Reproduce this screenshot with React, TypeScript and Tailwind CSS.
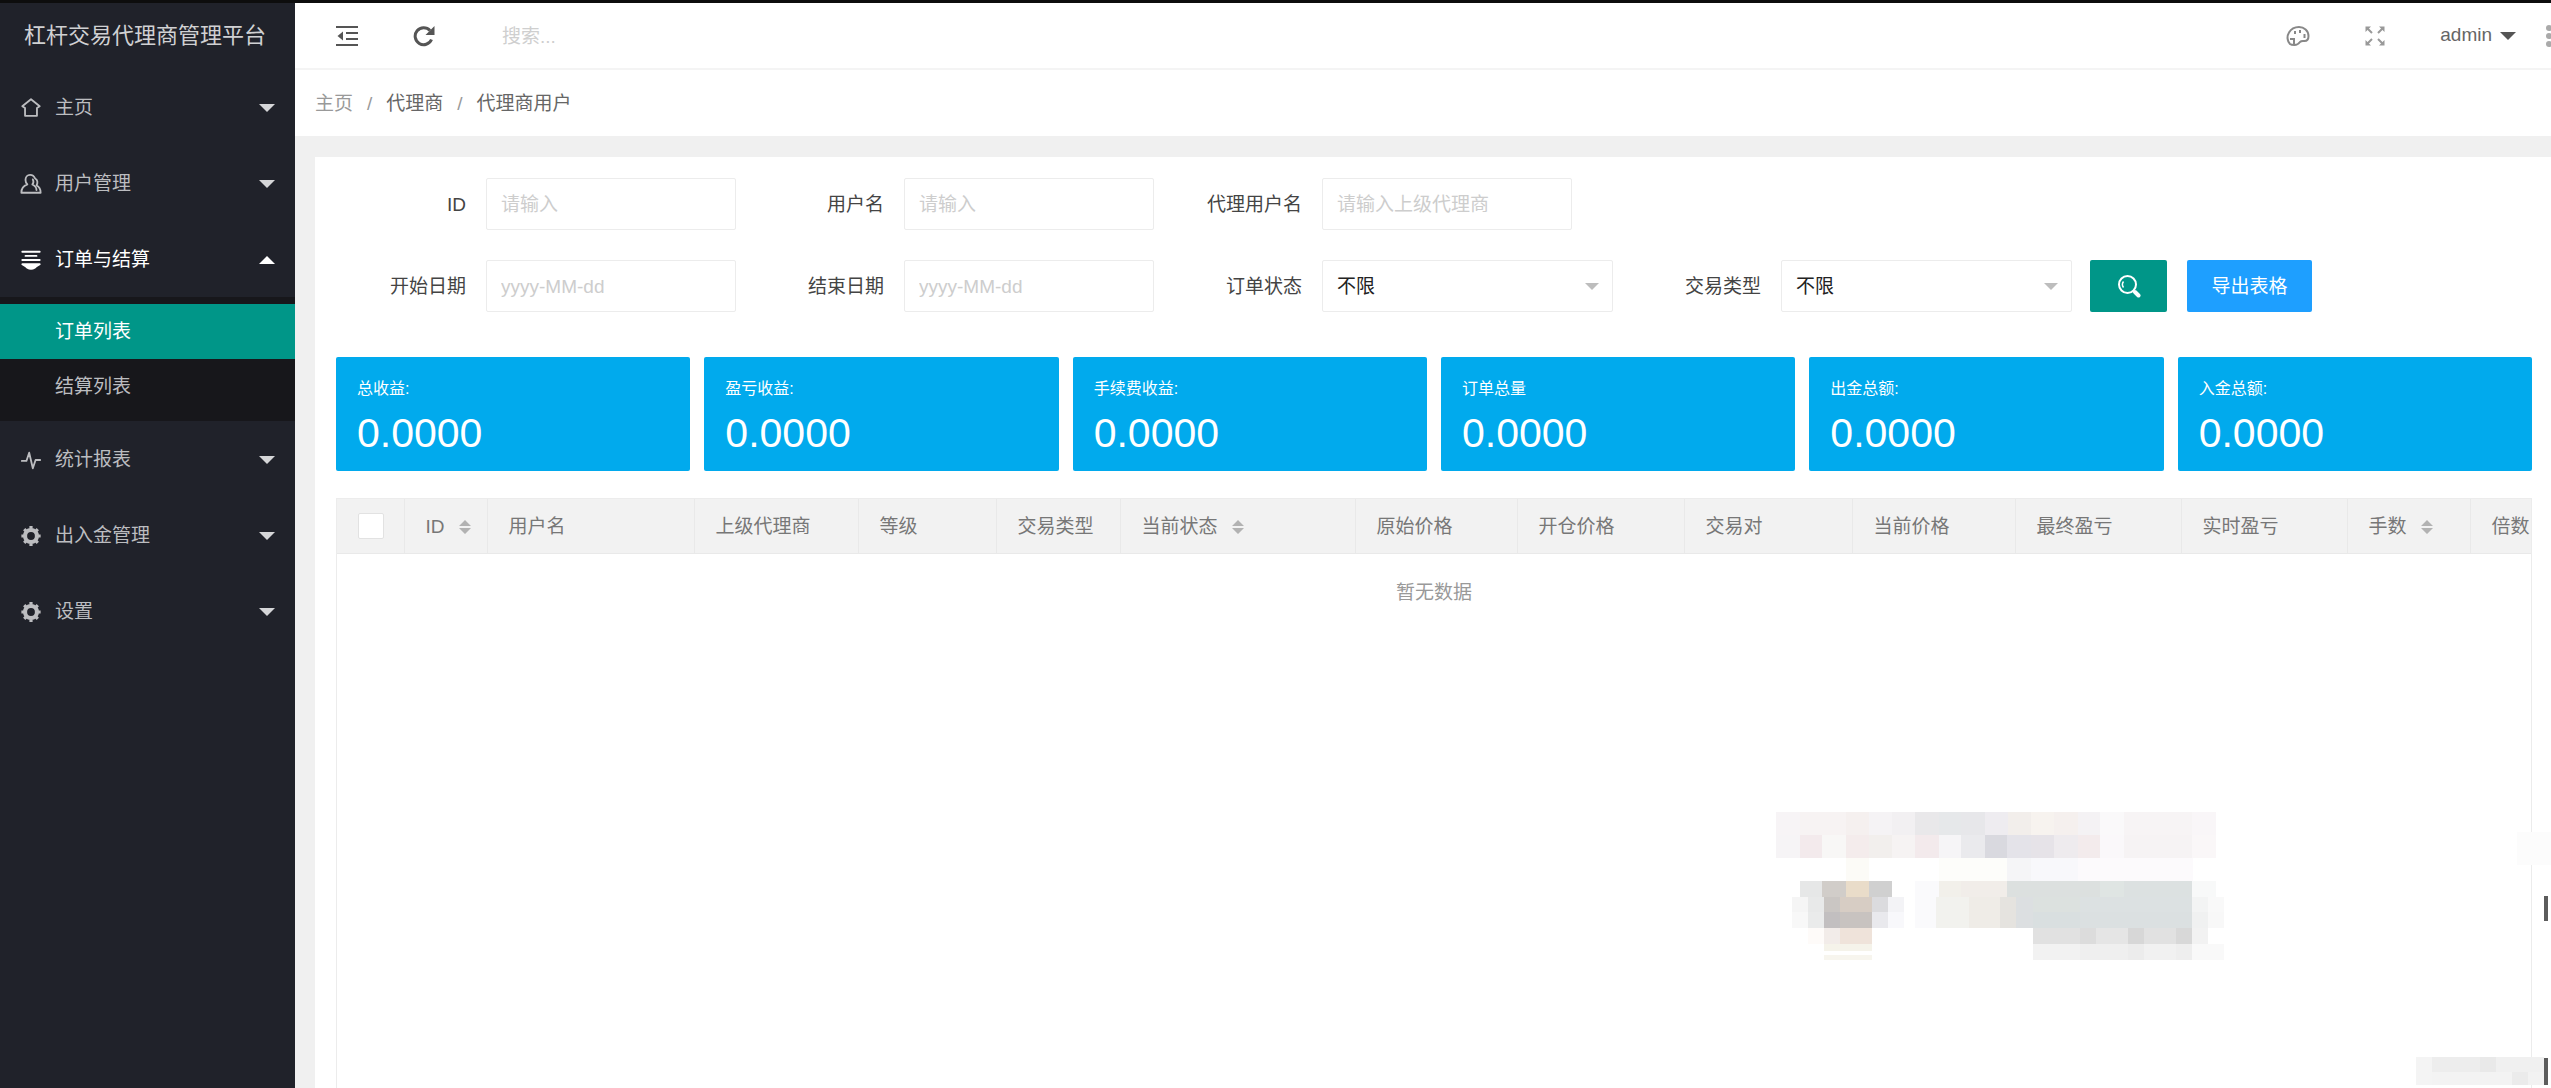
import type { ReactNode } from 'react';

type Block = [x: number, y: number, w: number, h: number, fill: string];

function IconBase({ children }: { children: ReactNode }) {
  return (
    <svg
      viewBox="0 0 24 24"
      fill="none"
      stroke="currentColor"
      strokeWidth="2"
      strokeLinecap="round"
      strokeLinejoin="round"
      className="size-[22px] shrink-0"
      aria-hidden="true"
    >
      {children}
    </svg>
  );
}

const HomeIcon = () => (
  <IconBase>
    <path d="M12 2.500 2.500 10l3 2v8.500h13V12l3-2z" />
  </IconBase>
);

const UserIcon = () => (
  <IconBase>
    <path d="M11 2c-3 0-5 2.500-5 5.500 0 2 .7 3.500 2 5C4 14 1.500 16.500 1.500 21.500h21c0-4-1.500-6.500-4.500-8 1.500-2.500 1.500-6-1.500-7.500C15.500 3.500 13.500 2 11 2z" />
    <path d="M14 7c1 2 .8 4-.5 5.500 3 1.500 4.500 3 4.500 6" />
  </IconBase>
);

const OrdersIcon = () => (
  <IconBase>
    <path d="M2.500 3h19M6 7.500h12M2.500 12h19" />
    <path d="M2.500 16.500h19l-4 2.500c-1 2-3 2.500-5.500 2.500s-4.500-.5-5.500-2.500z" fill="currentColor" />
  </IconBase>
);

const PulseIcon = () => (
  <IconBase>
    <path d="M2 13h5l3-9 4 17 3-9h5" />
  </IconBase>
);

const GearIcon = () => (
  <IconBase>
    <circle cx="12" cy="12" r="6.500" strokeWidth="4.500" />
    <path
      d="M12 1v3M12 20v3M1.500 12h3M19.500 12h3M4.600 4.600l2 2M17.400 17.400l2 2M4.600 19.400l2-2M17.400 6.600l2-2"
      strokeWidth="3.500"
      strokeLinecap="butt"
    />
  </IconBase>
);

function Caret({ up = false, className }: { up?: boolean; className: string }) {
  return (
    <svg viewBox="0 0 16 8" className={className} fill="currentColor" aria-hidden="true">
      <path d={up ? 'M0 8 8 0l8 8z' : 'M0 0h16L8 8z'} />
    </svg>
  );
}

function SortIcon() {
  return (
    <svg viewBox="0 0 12 16" className="ml-[14px] h-4 w-3 shrink-0 text-[#b2b2b2]" fill="currentColor" aria-hidden="true">
      <path d="M0 7 6 1l6 6zM0 9h12l-6 6z" />
    </svg>
  );
}

function NavItem({ icon, label, open = false }: { icon: ReactNode; label: string; open?: boolean }) {
  return (
    <button
      type="button"
      aria-expanded={open}
      className={
        open
          ? 'flex h-[76px] w-full items-center gap-[13px] px-5 pt-[2px] text-left text-white'
          : 'flex h-[76px] w-full items-center gap-[13px] px-5 pt-[2px] text-left text-[#bcbdc0]'
      }
    >
      {icon}
      <span className="flex-1">{label}</span>
      <Caret up={open} className={open ? 'h-2 w-4 text-white' : 'h-2 w-4 text-[#d5d6d8]'} />
    </button>
  );
}

function Sidebar() {
  return (
    <aside className="w-[295px] shrink-0 bg-[#20222a] text-[19px]">
      <div className="flex h-[66px] items-center pb-[2px] pl-6 text-[22px] whitespace-nowrap text-[#d0d1d3]">
        杠杆交易代理商管理平台
      </div>
      <nav>
        <NavItem icon={<HomeIcon />} label="主页" />
        <NavItem icon={<UserIcon />} label="用户管理" />
        <NavItem icon={<OrdersIcon />} label="订单与结算" open />
        <div className="bg-[#17171b] py-[7px]">
          <a href="#orders" className="flex h-[55px] items-center bg-[#009688] pt-[2px] pl-[55px] text-white">
            订单列表
          </a>
          <a href="#settlement" className="flex h-[55px] items-center pt-[2px] pl-[55px] text-[#bcbdc0]">
            结算列表
          </a>
        </div>
        <NavItem icon={<PulseIcon />} label="统计报表" />
        <NavItem icon={<GearIcon />} label="出入金管理" />
        <NavItem icon={<GearIcon />} label="设置" />
      </nav>
    </aside>
  );
}

function Header() {
  return (
    <header className="flex h-[67px] items-center border-b-2 border-[#f4f4f4] bg-white pl-[41px] text-[#555]">
      <button type="button" aria-label="收起菜单">
        <svg viewBox="0 0 22 22" className="size-[22px]" fill="none" stroke="currentColor" strokeWidth="2" aria-hidden="true">
          <path d="M0 2h22M10 8h12M10 14h12M0 20h22" />
          <path d="M7 6.500v9L1.500 11z" fill="currentColor" stroke="none" />
        </svg>
      </button>
      <button type="button" aria-label="刷新" className="ml-[55px]">
        <svg viewBox="0 0 22 22" className="size-[22px]" fill="none" stroke="currentColor" strokeWidth="3" aria-hidden="true">
          <path d="M18.500 14.500A8.500 8.500 0 1 1 17 5.500" />
          <path d="M21.500 1v9h-9z" fill="currentColor" stroke="none" />
        </svg>
      </button>
      <input
        type="text"
        aria-label="搜索"
        placeholder="搜索..."
        className="ml-[67px] h-12 w-[250px] pt-[2px] text-[19px] outline-none placeholder:text-[#cfcfcf]"
      />
      <div className="ml-auto flex items-center">
        <button type="button" aria-label="主题" className="text-[#888]">
          <svg viewBox="0 0 24 22" className="h-[22px] w-6" fill="none" stroke="currentColor" strokeWidth="2" aria-hidden="true">
            <path d="M4 19C1 16 .8 11 3 7.500 5 4 9 2 13 2c5 0 9.500 3.500 9.500 9 0 3.500-1.500 5-4 5-2 0-3-.5-4.500 1-1.500 2-2.500 3-5.500 3-1.800 0-3.300 0-4.500-1z" />
            <path d="M8 20v-6H4M9 6v3M14 5v3M18.500 9v4" />
          </svg>
        </button>
        <button type="button" aria-label="全屏" className="ml-[54px] text-[#999]">
          <svg viewBox="0 0 22 22" className="size-[22px]" fill="none" stroke="currentColor" strokeWidth="2" aria-hidden="true">
            <path d="m3 3 5 5M19 3l-5 5M3 19l5-5M19 19l-5-5" />
            <path d="M1.500 1.500H7L1.500 7zM20.500 1.500V7L15 1.500zM1.500 20.500V15L7 20.500zM20.500 20.500H15l5.500-5.500z" fill="currentColor" stroke="none" />
          </svg>
        </button>
        <button type="button" className="ml-[54px] flex items-center gap-2 text-[19px] text-[#666]">
          admin
          <Caret className="h-2 w-4 text-[#555]" />
        </button>
        <button type="button" aria-label="更多" className="ml-7 w-[7px] overflow-hidden text-[#aaa]">
          <svg viewBox="0 0 7 24" className="h-6 w-[7px]" fill="currentColor" aria-hidden="true">
            <circle cx="5" cy="4" r="3" />
            <circle cx="5" cy="12" r="3" />
            <circle cx="5" cy="20" r="3" />
          </svg>
        </button>
      </div>
    </header>
  );
}

function Breadcrumb() {
  return (
    <nav aria-label="面包屑" className="flex h-[66px] items-center bg-white pt-[2px] pl-5 text-[19px] text-[#666]">
      <a href="#home" className="text-[#999]">主页</a>
      <span className="mx-[14px] text-[#999]">/</span>
      <a href="#agent">代理商</a>
      <span className="mx-[14px] text-[#999]">/</span>
      <span>代理商用户</span>
    </nav>
  );
}

const labelClass = 'w-[150px] shrink-0 px-5 pt-[2px] text-right text-[#444]';
const boxClass = 'h-[52px] rounded-xs border border-[#ececec] bg-white pt-[2px] outline-none';

function TextField({ id, label, placeholder }: { id: string; label: string; placeholder: string }) {
  return (
    <div className="flex items-center">
      <label htmlFor={id} className={labelClass}>{label}</label>
      <input
        id={id}
        type="text"
        placeholder={placeholder}
        className={boxClass + ' w-[250px] px-[14px] placeholder:text-[#cdcdcd]'}
      />
    </div>
  );
}

function SelectField({ id, label }: { id: string; label: string }) {
  return (
    <div className="flex items-center">
      <label htmlFor={id} className={labelClass}>{label}</label>
      <div className="relative">
        <select id={id} className={boxClass + ' w-[291px] appearance-none px-[14px] text-[#222]'}>
          <option>不限</option>
        </select>
        <Caret className="pointer-events-none absolute top-[23px] right-[14px] h-[7px] w-[14px] text-[#bdbdbd]" />
      </div>
    </div>
  );
}

function Filters() {
  return (
    <form className="flex flex-col gap-[30px] text-[19px]">
      <div className="flex flex-wrap gap-[18px]">
        <TextField id="id" label="ID" placeholder="请输入" />
        <TextField id="username" label="用户名" placeholder="请输入" />
        <TextField id="agent" label="代理用户名" placeholder="请输入上级代理商" />
      </div>
      <div className="flex flex-wrap items-center gap-[18px]">
        <TextField id="start" label="开始日期" placeholder="yyyy-MM-dd" />
        <TextField id="end" label="结束日期" placeholder="yyyy-MM-dd" />
        <SelectField id="status" label="订单状态" />
        <SelectField id="type" label="交易类型" />
        <div className="flex items-center gap-5">
          <button
            type="button"
            aria-label="查询"
            className="flex h-[52px] w-[77px] items-center justify-center rounded-xs bg-[#009688] text-white"
          >
            <svg viewBox="0 0 24 24" className="size-6" fill="none" stroke="currentColor" strokeWidth="2" aria-hidden="true">
              <circle cx="10.500" cy="10.500" r="8.500" />
              <path d="M6.500 13.500a5 5 0 0 1 0-6" strokeWidth="1.500" />
              <path d="m18 18 3.500 3.500" strokeWidth="4" strokeLinecap="round" />
            </svg>
          </button>
          <button type="button" className="h-[52px] w-[125px] rounded-xs bg-[#1e9fff] pt-[2px] text-white">
            导出表格
          </button>
        </div>
      </div>
    </form>
  );
}

const stats = ['总收益:', '盈亏收益:', '手续费收益:', '订单总量', '出金总额:', '入金总额:'];

function Stats() {
  return (
    <dl className="mt-[45px] grid grid-cols-6 gap-[14px]">
      {stats.map((label) => (
        <div key={label} className="h-[114px] rounded-xs bg-[#01aaed] px-[21px] pt-5 text-white">
          <dt className="text-[16px] leading-6">{label}</dt>
          <dd className="mt-[6px] text-[41px] leading-[52px]">0.0000</dd>
        </div>
      ))}
    </dl>
  );
}

const columns = [
  { label: 'ID', width: 'w-[83px]', sort: true },
  { label: '用户名', width: 'w-[207px]' },
  { label: '上级代理商', width: 'w-[164px]' },
  { label: '等级', width: 'w-[138px]' },
  { label: '交易类型', width: 'w-[124px]' },
  { label: '当前状态', width: 'w-[235px]', sort: true },
  { label: '原始价格', width: 'w-[162px]' },
  { label: '开仓价格', width: 'w-[167px]' },
  { label: '交易对', width: 'w-[168px]' },
  { label: '当前价格', width: 'w-[163px]' },
  { label: '最终盈亏', width: 'w-[166px]' },
  { label: '实时盈亏', width: 'w-[166px]' },
  { label: '手数', width: 'w-[123px]', sort: true },
  { label: '倍数', width: 'w-[123px]' },
];

function OrdersTable() {
  return (
    <div className="mt-[27px] flex-1 overflow-hidden border border-b-0 border-[#ececec] text-[19px]">
      <table className="w-[2256px] table-fixed border-collapse">
        <thead>
          <tr className="h-[54px] border-b border-[#e9e9e9] bg-[#f2f2f2] text-[#777]">
            <th className="w-[67px] border-r border-[#e9e9e9] pl-[21px]">
              <input
                type="checkbox"
                aria-label="全选"
                className="block size-[26px] appearance-none rounded-xs border border-[#e2e2e2] bg-white"
              />
            </th>
            {columns.map((c) => (
              <th key={c.label} className={c.width + ' border-r border-[#e9e9e9] pt-[2px] pl-[21px] text-left font-normal'}>
                <span className="flex items-center whitespace-nowrap">
                  {c.label}
                  {c.sort && <SortIcon />}
                </span>
              </th>
            ))}
          </tr>
        </thead>
      </table>
      <p className="pt-[25px] text-center leading-7 text-[#999]">暂无数据</p>
    </div>
  );
}

/* Censored area: pale pixel blocks, in the drawing's own coordinates. */
const blocks: Block[] = [
  [70, 96, 46, 69, '#f7f4f6'], [116, 96, 88, 69, '#f7f3f3'], [204, 96, 46, 69, '#f5f0ef'], [250, 96, 44, 69, '#f5f3f5'],
  [294, 96, 44, 69, '#f2f0f2'], [338, 96, 46, 69, '#e9e8ea'], [384, 96, 44, 69, '#e6e8ea'], [428, 96, 45, 69, '#e7e7ea'],
  [473, 96, 46, 69, '#eeecf0'], [519, 96, 44, 69, '#f2eeeb'], [563, 96, 44, 69, '#f7f3ef'], [607, 96, 46, 69, '#f5f0ee'],
  [653, 96, 43, 69, '#f4f2f4'], [696, 96, 46, 69, '#faf9fa'], [742, 96, 132, 69, '#f7f4f5'], [874, 96, 46, 69, '#f9f6f8'],
  [70, 165, 46, 70, '#f6f4f6'], [116, 165, 43, 70, '#f3eaec'], [159, 165, 45, 70, '#f8f7f6'], [204, 165, 46, 70, '#f4ecec'],
  [250, 165, 44, 70, '#f2efed'], [294, 165, 44, 70, '#f6f3f3'], [338, 165, 46, 70, '#f3eaec'], [384, 165, 44, 70, '#f6f5f7'],
  [428, 165, 45, 70, '#eaeaed'], [473, 165, 44, 70, '#d9d9df'], [517, 165, 46, 70, '#e4e3e9'], [563, 165, 44, 70, '#e6e3e8'],
  [607, 165, 46, 70, '#eeebee'], [653, 165, 43, 70, '#f3ebec'], [696, 165, 46, 70, '#faf8fa'], [742, 165, 132, 70, '#f6f3f4'],
  [874, 165, 46, 70, '#faf7f8'], [204, 235, 46, 68, '#fcfbf7'], [384, 235, 133, 68, '#fdfdfa'], [517, 235, 46, 68, '#f5f5f7'],
  [563, 235, 90, 68, '#f8f8fb'], [653, 235, 222, 68, '#fcfafc'],
  [116, 303, 43, 47, '#e6e7e7'], [159, 303, 45, 47, '#d1cdc9'], [204, 303, 46, 47, '#e9dcc9'], [250, 303, 44, 47, '#d0d0d0'],
  [338, 303, 46, 141, '#fafafc'],
  [384, 303, 44, 47, '#f2f0ea'], [428, 303, 89, 47, '#f1ede9'], [517, 303, 179, 47, '#dce0df'], [696, 303, 46, 47, '#dfe5e3'],
  [742, 303, 132, 47, '#dce1e1'], [874, 303, 46, 47, '#f8f9f9'],
  [100, 350, 31, 46, '#f5f5f5'], [131, 350, 31, 46, '#e8e9e9'], [162, 350, 31, 46, '#cac6c3'], [193, 350, 62, 46, '#d7cdc4'],
  [255, 350, 31, 46, '#dbdbde'], [286, 350, 31, 46, '#f3f3f6'], [378, 350, 64, 94, '#f2f2ee'], [442, 350, 60, 94, '#efece7'],
  [502, 350, 32, 94, '#e5e3df'], [534, 350, 32, 94, '#dcdfe1'], [566, 350, 92, 46, '#dce1df'], [658, 350, 216, 46, '#dce1e2'],
  [874, 350, 30, 46, '#f3f4f4'], [904, 350, 32, 46, '#f9f9f9'],
  [100, 396, 31, 48, '#f8f8f8'], [131, 396, 31, 48, '#eaebeb'], [162, 396, 31, 48, '#c2bfc0'], [193, 396, 62, 48, '#c8c3c0'],
  [255, 396, 31, 48, '#e9e9ed'], [286, 396, 31, 48, '#f8f8fb'], [566, 396, 92, 48, '#d9dfe0'], [658, 396, 216, 48, '#dbe0e1'],
  [874, 396, 30, 48, '#f0f1f1'], [904, 396, 32, 48, '#f8f8f8'],
  [131, 444, 31, 48, '#fefbf9'], [162, 444, 31, 48, '#f2ece9'], [193, 444, 62, 48, '#efe3da'],
  [566, 444, 92, 48, '#e1e1e1'], [658, 444, 30, 48, '#dcdcdc'], [688, 444, 62, 48, '#e5e5e5'], [750, 444, 31, 48, '#d7d7d7'],
  [781, 444, 62, 48, '#e1e1e1'], [843, 444, 31, 48, '#d8d8d8'], [874, 444, 30, 48, '#f2f2f2'],
  [162, 492, 93, 20, '#f5f3ea'], [162, 524, 93, 16, '#f7f5ee'],
  [566, 492, 92, 48, '#f2f2f2'], [658, 492, 92, 48, '#efefef'], [750, 492, 31, 48, '#ececec'], [781, 492, 62, 48, '#f1f1f1'],
  [843, 492, 31, 48, '#eeeeee'], [874, 492, 62, 48, '#f9f9f9'],
  [1307, 830, 31, 84, '#f4f4f4'], [1338, 830, 92, 46, '#ededed'], [1430, 830, 32, 46, '#e9e9e9'], [1462, 830, 92, 46, '#f0f0f0'],
  [1338, 876, 155, 38, '#f3f3f3'], [1493, 876, 31, 38, '#ebebeb'], [1524, 876, 30, 38, '#f2f2f2'],
  [1502, 156, 66, 100, '#fcfcfc'],
  [1554, 348, 8, 74, '#5c5c5c'], [1554, 834, 8, 80, '#5c5c5c'],
];

function PixelBlocks() {
  return (
    <svg
      viewBox="0 0 1568 924"
      preserveAspectRatio="none"
      shapeRendering="crispEdges"
      className="pointer-events-none absolute right-0 bottom-0 h-[308px] w-[811px]"
      aria-hidden="true"
    >
      {blocks.map(([x, y, w, h, fill]) => (
        <rect key={x + '-' + y} x={x} y={y} width={w} height={h} fill={fill} />
      ))}
    </svg>
  );
}

export default function App() {
  return (
    <div className="relative flex min-h-screen flex-col overflow-hidden bg-[#f0f0f0] font-['Liberation_Sans','Noto_Sans_CJK_SC',sans-serif]">
      <div className="h-[3px] bg-[#0d0d0d]" />
      <div className="flex flex-1">
        <Sidebar />
        <div className="flex min-w-0 flex-1 flex-col">
          <Header />
          <Breadcrumb />
          <main className="mt-[21px] ml-5 flex flex-1 flex-col bg-white pt-[21px] pr-[19px] pl-[21px]">
            <Filters />
            <Stats />
            <OrdersTable />
          </main>
        </div>
      </div>
      <PixelBlocks />
    </div>
  );
}
